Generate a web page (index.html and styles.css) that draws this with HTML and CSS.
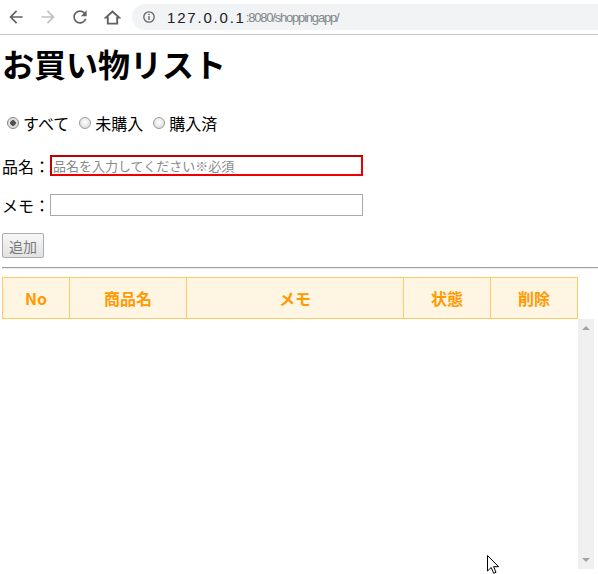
FILE: index.html
```html
<!DOCTYPE html>
<html lang="ja">
<head>
<meta charset="utf-8">
<title>お買い物リスト</title>
<link rel="stylesheet" href="styles.css">
</head>
<body>
<div class="toolbar">
  <div class="nav-btn">
    <svg width="20" height="20" viewBox="0 0 24 24"><path fill="#5f6368" d="M20 11H7.83l5.59-5.59L12 4l-8 8 8 8 1.41-1.41L7.83 13H20v-2z"/></svg>
  </div>
  <div class="nav-btn">
    <svg width="20" height="20" viewBox="0 0 24 24"><path fill="#bdc1c6" d="M4 11h12.17l-5.59-5.59L12 4l8 8-8 8-1.41-1.41L16.17 13H4v-2z"/></svg>
  </div>
  <div class="nav-btn">
    <svg width="20" height="20" viewBox="0 0 24 24"><path fill="#5f6368" d="M17.65 6.35C16.2 4.9 14.21 4 12 4c-4.42 0-7.990 3.58-7.99 8s3.57 8 7.99 8c3.73 0 6.84-2.55 7.73-6h-2.08c-.82 2.33-3.04 4-5.65 4-3.31 0-6-2.690-6-6s2.69-6 6-6c1.66 0 3.14.69 4.22 1.78L13 11h7V4l-2.35 2.35z"/></svg>
  </div>
  <div class="nav-btn">
    <svg width="17" height="15" viewBox="0 0 17 15"><path d="M8.5 1.5 L1.8 7.6 H3.8 V13.6 H13.2 V7.6 H15.2 Z" fill="none" stroke="#5f6368" stroke-width="1.9" stroke-linejoin="miter"/></svg>
  </div>
  <div class="omnibox">
    <svg class="info-icon" width="12" height="12" viewBox="0 0 12 12"><circle cx="6" cy="6" r="5.2" fill="none" stroke="#5f6368" stroke-width="1.3"/><rect x="5.35" y="5" width="1.3" height="4" fill="#5f6368"/><rect x="5.35" y="2.8" width="1.3" height="1.3" fill="#5f6368"/></svg>
    <span class="url-host">127.0.0.1</span><span class="url-rest">:8080/shoppingapp/</span>
  </div>
</div>

<div class="page">
  <h1 class="title">お買い物リスト</h1>

  <div class="filters">
    <label class="filter"><input type="radio" name="filter" class="radio" checked>すべて</label>
    <label class="filter"><input type="radio" name="filter" class="radio">未購入</label>
    <label class="filter"><input type="radio" name="filter" class="radio">購入済</label>
  </div>

  <div class="field field-name">
    <label class="field-label">品名：</label>
    <input type="text" class="text-input input-required" placeholder="品名を入力してください※必須">
  </div>

  <div class="field field-memo">
    <label class="field-label">メモ：</label>
    <input type="text" class="text-input input-memo">
  </div>

  <button class="add-btn">追加</button>

  <hr class="divider">

  <div class="list-header">
    <div class="hcell">No</div>
    <div class="hcell">商品名</div>
    <div class="hcell">メモ</div>
    <div class="hcell">状態</div>
    <div class="hcell hcell-last">削除</div>
  </div>

  <div class="list-body">
    <div class="list-rows"></div>
    <div class="scrollbar">
      <span class="arrow-up"></span>
      <span class="arrow-down"></span>
    </div>
  </div>
</div>

<svg class="cursor" width="13" height="20" viewBox="0 0 13 20"><path d="M0.5 0.5 L0.5 16 L4.2 12.5 L6.7 18.3 L9 17.3 L6.6 11.7 L11.6 11.7 Z" fill="#fff" stroke="#000" stroke-width="1" stroke-linejoin="miter"/></svg>
</body>
</html>
```

FILE: styles.css
```css
* { box-sizing: border-box; }
html, body { margin: 0; padding: 0; }
body {
  width: 598px;
  height: 574px;
  overflow: hidden;
  background: #fff;
  color: #000;
  font-family: "Noto Sans CJK JP", "Liberation Sans", sans-serif;
  position: relative;
}

/* browser toolbar */
.toolbar {
  height: 35px;
  border-bottom: 1px solid #c4c4c4;
  display: flex;
  align-items: center;
}
.nav-btn {
  width: 32px;
  height: 34px;
  display: flex;
  align-items: center;
  justify-content: center;
  flex: none;
}
.omnibox {
  margin-left: 4px;
  flex: 1;
  height: 26px;
  border-radius: 13px 0 0 13px;
  background: #f1f3f4;
  display: flex;
  align-items: center;
  padding-left: 11px;
  white-space: nowrap;
}
.info-icon { flex: none; margin-right: 12px; }
.url-host {
  font-family: "Liberation Sans", sans-serif;
  font-size: 15px;
  letter-spacing: 1.8px;
  color: #202124;
}
.url-rest {
  font-family: "Liberation Sans", sans-serif;
  font-size: 13px;
  letter-spacing: -1.2px;
  color: #80868b;
}

/* page */
.page { padding-left: 2px; }

.title {
  margin: 12px 0 0;
  height: 32px;
  font-size: 32px;
  line-height: 32px;
  font-weight: bold;
  white-space: nowrap;
}

.filters {
  margin-top: 34px;
  height: 20px;
  display: flex;
  gap: 5px;
  font-size: 16px;
  line-height: 20px;
}
.filter {
  display: inline-flex;
  align-items: center;
}
.radio {
  appearance: none;
  -webkit-appearance: none;
  width: 12px;
  height: 12px;
  margin: 0 4px 0 5px;
  border-radius: 50%;
  border: 1px solid #9a9a9a;
  background: radial-gradient(circle at 50% 40%, #ffffff 0, #ececec 45%, #d0d0d0 100%);
}
.radio:checked {
  border-color: #858585;
  background: radial-gradient(circle, #4f4f4f 0 2.5px, #d6d6d6 3px, #f2f2f2 100%);
}

.field {
  display: flex;
  align-items: center;
  font-size: 16px;
}
.field-name { margin-top: 22px; height: 21px; }
.field-memo { margin-top: 18px; height: 22px; }
.field-label { width: 48px; line-height: 20px; white-space: nowrap; }
.text-input {
  width: 313px;
  margin: 0;
  padding: 0 0 0 1px;
  font-family: "Noto Sans CJK JP", sans-serif;
  font-size: 13px;
  outline: none;
  background: #fff;
}
.input-required {
  height: 21px;
  border: 2px solid;
  border-color: #bf0000 #ee0000 #ee0000 #bf0000;
}
.input-memo {
  height: 22px;
  border: 1px solid #a9a9a9;
}
.text-input::placeholder { color: #8a8a8a; }

.add-btn {
  display: block;
  margin-top: 17px;
  width: 42px;
  height: 25px;
  padding: 0;
  border: 1px solid #acacac;
  border-radius: 2px;
  background: linear-gradient(#f7f7f7, #e2e2e2);
  color: #7a7a7a;
  font-family: "Noto Sans CJK JP", sans-serif;
  font-size: 14px;
  line-height: 20px;
}

.divider {
  margin: 9px 0 0;
  height: 2px;
  border: 0;
  border-top: 1px solid #9f9f9f;
  border-bottom: 1px solid #ededed;
}

.list-header {
  margin-top: 8px;
  width: 576px;
  display: grid;
  grid-template-columns: 67px 117px 217px 87px 88px;
  background: #fff5e3;
}
.hcell {
  height: 42px;
  border-top: 1px solid #ffc966;
  border-bottom: 1px solid #ffc966;
  border-left: 1px solid #ffc966;
  display: flex;
  align-items: center;
  justify-content: center;
  color: #ff9a00;
  font-weight: bold;
  font-size: 16px;
  line-height: 20px;
  font-family: "Noto Sans CJK JP", sans-serif;
}
.hcell-last { border-right: 1px solid #ffc966; }

.list-body {
  display: flex;
  width: 592px;
  height: 250px;
}
.list-rows { width: 576px; }
.scrollbar {
  width: 16px;
  background: #f0f0f0;
  display: flex;
  flex-direction: column;
  align-items: center;
  justify-content: space-between;
  padding: 7px 0;
}
.arrow-up {
  width: 0;
  height: 0;
  border-left: 4px solid transparent;
  border-right: 4px solid transparent;
  border-bottom: 4px solid #a3a3a3;
}
.arrow-down {
  width: 0;
  height: 0;
  border-left: 4px solid transparent;
  border-right: 4px solid transparent;
  border-top: 4px solid #a3a3a3;
}

.cursor {
  position: absolute;
  left: 487px;
  top: 555px;
}
```
